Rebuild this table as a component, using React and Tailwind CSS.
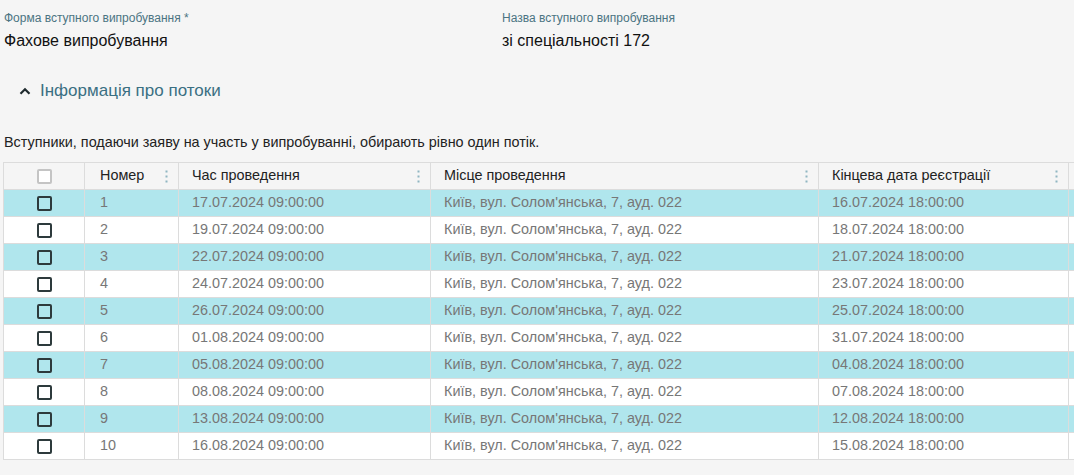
import React from "react";

const rows = [
  ["1", "17.07.2024 09:00:00", "16.07.2024 18:00:00"],
  ["2", "19.07.2024 09:00:00", "18.07.2024 18:00:00"],
  ["3", "22.07.2024 09:00:00", "21.07.2024 18:00:00"],
  ["4", "24.07.2024 09:00:00", "23.07.2024 18:00:00"],
  ["5", "26.07.2024 09:00:00", "25.07.2024 18:00:00"],
  ["6", "01.08.2024 09:00:00", "31.07.2024 18:00:00"],
  ["7", "05.08.2024 09:00:00", "04.08.2024 18:00:00"],
  ["8", "08.08.2024 09:00:00", "07.08.2024 18:00:00"],
  ["9", "13.08.2024 09:00:00", "12.08.2024 18:00:00"],
  ["10", "16.08.2024 09:00:00", "15.08.2024 18:00:00"],
];

function Dots() {
  return (
    <svg width="3" height="13" viewBox="0 0 3 13" className="absolute right-[10px] top-[7px]">
      <rect x="0.5" y="0.5" width="2" height="2" fill="#8fb6c2" />
      <rect x="0.5" y="5.5" width="2" height="2" fill="#8fb6c2" />
      <rect x="0.5" y="10.5" width="2" height="2" fill="#8fb6c2" />
    </svg>
  );
}

function Box({ light }) {
  return (
    <div
      className={
        "mx-auto w-[15px] h-[15px] rounded-[2px] border-2 " +
        (light ? "border-[#c4c4c4] bg-white" : "border-[#2d3a3c]")
      }
    />
  );
}

export default function App() {
  return (
    <div className="w-[1074px] h-[475px] bg-[#f5f5f5] overflow-hidden font-['Liberation_Sans',Arial,sans-serif]">
      <div className="flex pt-[11px]">
        <div className="w-[502px] pl-[4px]">
          <div className="text-[12px] leading-[14px] text-[#4b7482]">Форма вступного випробування *</div>
          <div className="text-[16px] leading-[18px] mt-[7px] text-[#111]">Фахове випробування</div>
        </div>
        <div>
          <div className="text-[12px] leading-[14px] text-[#4b7482]">Назва вступного випробування</div>
          <div className="text-[16px] leading-[18px] mt-[7px] text-[#111]">зі спеціальності 172</div>
        </div>
      </div>
      <div className="flex items-center mt-[29px] pl-[19px] h-[24px]">
        <svg width="12" height="8" viewBox="0 0 12 8" className="mr-[9px]">
          <path d="M1.5 6.8 L6 2.3 L10.5 6.8" fill="none" stroke="#1f2a2e" strokeWidth="2.2" />
        </svg>
        <span className="text-[17px] text-[#3a6f82]">Інформація про потоки</span>
      </div>
      <div className="mt-[31px] pl-[4px] text-[14.4px] leading-[16px] text-[#222]">
        Вступники, подаючи заяву на участь у випробуванні, обирають рівно один потік.
      </div>
      <div className="mt-[12px] ml-[3px] w-[1071px] overflow-hidden">
        <table className="border-collapse table-fixed w-[1100px] text-[14.4px]">
          <colgroup>
            <col className="w-[81px]" />
            <col className="w-[94px]" />
            <col className="w-[252px]" />
            <col className="w-[388px]" />
            <col className="w-[250px]" />
            <col className="w-[35px]" />
          </colgroup>
          <thead>
            <tr className="h-[27px] bg-[#f5f5f5]">
              <th className="border border-[#dcdcdc] p-0 font-normal"><Box light /></th>
              <th className="relative border border-[#dcdcdc] text-left font-normal pl-[15px] text-[#222]">Номер<Dots /></th>
              <th className="relative border border-[#dcdcdc] text-left font-normal pl-[13px] text-[#222]">Час проведення<Dots /></th>
              <th className="relative border border-[#dcdcdc] text-left font-normal pl-[13px] text-[#222]">Місце проведення<Dots /></th>
              <th className="relative border border-[#dcdcdc] text-left font-normal pl-[13px] text-[#222]">Кінцева дата реєстрації<Dots /></th>
              <th className="border border-[#dcdcdc]"></th>
            </tr>
          </thead>
          <tbody>
            {rows.map((r, i) => (
              <tr key={r[0]} className={"h-[27px] " + (i % 2 === 0 ? "bg-[#b0e6ed]" : "bg-white")}>
                <td className="border border-[#dcdcdc] p-0"><Box /></td>
                <td className="border border-[#dcdcdc] pl-[15px] text-[#777]">{r[0]}</td>
                <td className="border border-[#dcdcdc] pl-[13px] text-[#777]">{r[1]}</td>
                <td className="border border-[#dcdcdc] pl-[13px] text-[#777]">Київ, вул. Солом'янська, 7, ауд. 022</td>
                <td className="border border-[#dcdcdc] pl-[13px] text-[#777]">{r[2]}</td>
                <td className="border border-[#dcdcdc]"></td>
              </tr>
            ))}
          </tbody>
        </table>
      </div>
    </div>
  );
}
